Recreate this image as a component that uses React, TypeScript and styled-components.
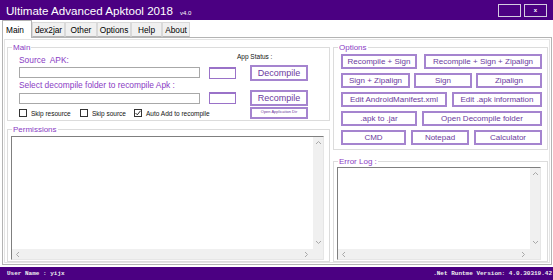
import React from "react";
import styled, { createGlobalStyle } from "styled-components";

const colours = {
  bar: "#4b0082",
  label: "#8a3cc4",
  btnBorder: "#a584cf",
  btnText: "#6b3a9e",
  group: "#dcdcdc",
  scroll: "#f0f0f0",
  arrow: "#a8a8a8",
};

const GlobalStyle = createGlobalStyle`
  html, body { margin: 0; padding: 0; background: #fff; }
  body { font-family: "Liberation Sans", Arial, sans-serif; }
  * { box-sizing: border-box; }
`;

const Window = styled.div`
  width: 553px;
  height: 280px;
  overflow: hidden;
  display: flex;
  flex-direction: column;
  background: #fff;
`;

const TitleBar = styled.div`
  flex: none;
  height: 20px;
  background: ${colours.bar};
  display: flex;
  align-items: center;
  justify-content: space-between;
  padding: 0 6px 0 6px;
`;
const Title = styled.div`
  color: #fff;
  font-size: 11.6px;
  white-space: nowrap;
  padding-top: 1px;
`;
const Version = styled.span`
  font-size: 6px;
  margin-left: 7px;
`;
const WinButtons = styled.div`
  display: flex;
  gap: 3px;
`;
const WinButton = styled.div`
  width: 23px;
  height: 13px;
  border: 1px solid #d4cce0;
  color: #fff;
  font-size: 6px;
  font-weight: bold;
  display: flex;
  align-items: center;
  justify-content: center;
`;

const TabStrip = styled.div`
  flex: none;
  height: 17px;
  display: flex;
  align-items: flex-end;
  padding-left: 2px;
  position: relative;
  z-index: 1;
`;
const Tab = styled.div<{ $w: number; $active?: boolean }>`
  width: ${(p) => p.$w}px;
  height: ${(p) => (p.$active ? 18 : 15)}px;
  margin-bottom: ${(p) => (p.$active ? -1 : 0)}px;
  background: ${(p) => (p.$active ? "#fff" : "#f0f0f0")};
  border: 1px solid ${(p) => (p.$active ? "#b4b4b4" : "#d9d9d9")};
  border-bottom: ${(p) => (p.$active ? "none" : "1px solid #b4b4b4")};
  font-size: 8.3px;
  color: #000;
  display: flex;
  align-items: center;
  justify-content: ${(p) => (p.$active ? "flex-start" : "center")};
  padding-left: ${(p) => (p.$active ? 3 : 0)}px;
  white-space: nowrap;
`;

const TabPage = styled.div`
  flex: none;
  height: 228px;
  margin: 0 1px 0 2px;
  border: 1px solid #b4b4b4;
  box-shadow: inset 0 0 0 1px #fff, inset 0 0 0 2px #e4e4e4;
  padding: 5px 3px 0 4px;
  display: grid;
  grid-template-columns: 323px 215px;
  column-gap: 3px;
  align-content: start;
`;

const Column = styled.div<{ $gap: number }>`
  display: flex;
  flex-direction: column;
  gap: ${(p) => p.$gap}px;
`;

const Group = styled.fieldset<{ $h: number }>`
  margin: 0;
  padding: 0;
  min-width: 0;
  height: ${(p) => p.$h}px;
  border: 1px solid ${colours.group};
  overflow: hidden;
`;
const Legend = styled.legend`
  margin-left: 4px;
  padding: 0 1px;
  font-size: 8px;
  line-height: 9px;
  color: ${colours.label};
`;
const GroupBody = styled.div<{ $pad: string }>`
  padding: ${(p) => p.$pad};
`;

const Row = styled.div<{ $h: number; $align?: string }>`
  height: ${(p) => p.$h}px;
  display: flex;
  align-items: ${(p) => p.$align || "center"};
`;
const FieldLabel = styled.div<{ $w?: number; $top?: number }>`
  width: ${(p) => (p.$w ? `${p.$w}px` : "auto")};
  margin-top: ${(p) => p.$top || 0}px;
  font-size: 8.4px;
  line-height: 9px;
  color: ${colours.label};
  white-space: pre;
`;
const StatusLabel = styled.div`
  font-size: 6.5px;
  line-height: 8px;
  color: #111;
  margin-top: 1px;
  white-space: nowrap;
`;
const TextInput = styled.div`
  width: 181px;
  height: 11px;
  border: 1px solid #a8a8a8;
  background: #fff;
`;
const StatusBox = styled.div`
  width: 27px;
  height: 12px;
  margin-left: 9px;
  border-style: solid;
  border-width: 2px 1px 1px 1px;
  border-color: #9a72c8;
  background: #fff;
`;
const ActionButton = styled.div<{ $h?: number; $fs?: number; $tiny?: boolean }>`
  width: 58px;
  height: ${(p) => p.$h || 16}px;
  margin-left: ${(p) => (p.$tiny ? 0 : 14)}px;
  border: 2px solid ${colours.btnBorder};
  background: #fff;
  color: ${colours.btnText};
  font-size: ${(p) => p.$fs || 9}px;
  display: flex;
  align-items: ${(p) => (p.$tiny ? "flex-start" : "center")};
  justify-content: center;
  white-space: nowrap;
  overflow: hidden;
`;

const CheckRow = styled.div`
  width: 231px;
  display: flex;
  align-items: center;
`;
const CheckItem = styled.div<{ $w: number }>`
  width: ${(p) => p.$w}px;
  display: flex;
  align-items: center;
  gap: 4px;
  font-size: 6.5px;
  color: #111;
  white-space: nowrap;
`;
const CheckBox = styled.div`
  width: 8px;
  height: 8px;
  border: 1px solid #333;
  background: #fff;
  display: flex;
  align-items: center;
  justify-content: center;
`;

const OptionRows = styled.div`
  display: flex;
  flex-direction: column;
  gap: 4px;
`;
const OptionRow = styled.div`
  display: flex;
  justify-content: space-between;
`;
const OptButton = styled.div<{ $w: number }>`
  width: ${(p) => p.$w}px;
  height: 15px;
  border: 2px solid ${colours.btnBorder};
  background: #fff;
  color: ${colours.btnText};
  font-size: 8px;
  display: flex;
  align-items: center;
  justify-content: center;
  white-space: nowrap;
`;

const ScrollBox = styled.div<{ $w: number; $h: number }>`
  width: ${(p) => p.$w}px;
  height: ${(p) => p.$h}px;
  border: 1px solid;
  border-color: #7f7f7f #e6e6e6 #e6e6e6 #7f7f7f;
  background: #fff;
  display: grid;
  grid-template-columns: 1fr 10px;
  grid-template-rows: 1fr 10px;
`;
const VScroll = styled.div`
  background: ${colours.scroll};
  display: flex;
  flex-direction: column;
  justify-content: space-between;
  align-items: center;
  padding: 3px 0;
`;
const HScroll = styled.div`
  background: ${colours.scroll};
  display: flex;
  justify-content: space-between;
  align-items: center;
  padding: 0 3px;
`;
const Corner = styled.div`
  background: ${colours.scroll};
`;

const StatusBar = styled.div`
  flex: none;
  height: 13px;
  margin-top: 2px;
  background: ${colours.bar};
  color: #eee;
  font-family: "Liberation Mono", "DejaVu Sans Mono", monospace;
  font-weight: bold;
  font-size: 6px;
  display: flex;
  align-items: center;
  justify-content: space-between;
  padding: 0 1px 0 7px;
  white-space: pre;
`;

const Arrow = ({ dir }: { dir: "up" | "down" | "left" | "right" }) => {
  const d = {
    up: "M1 4 L3.5 1.5 L6 4",
    down: "M1 2 L3.5 4.5 L6 2",
    left: "M4 1 L1.5 3.5 L4 6",
    right: "M2 1 L4.5 3.5 L2 6",
  }[dir];
  return (
    <svg width="7" height="7" viewBox="0 0 7 7">
      <path d={d} fill="none" stroke={colours.arrow} strokeWidth="1" />
    </svg>
  );
};

const TextArea = ({ w, h }: { w: number; h: number }) => (
  <ScrollBox $w={w} $h={h}>
    <div />
    <VScroll>
      <Arrow dir="up" />
      <Arrow dir="down" />
    </VScroll>
    <HScroll>
      <Arrow dir="left" />
      <Arrow dir="right" />
    </HScroll>
    <Corner />
  </ScrollBox>
);

const Check = ({ checked }: { checked?: boolean }) => (
  <CheckBox>
    {checked && (
      <svg width="6" height="6" viewBox="0 0 6 6">
        <path d="M0.5 3 L2.3 4.8 L5.5 0.8" fill="none" stroke="#222" strokeWidth="1" />
      </svg>
    )}
  </CheckBox>
);

const tabs = [
  { name: "Main", w: 30 },
  { name: "dex2jar", w: 33 },
  { name: "Other", w: 32 },
  { name: "Options", w: 34 },
  { name: "Help", w: 31 },
  { name: "About", w: 28 },
];

const optionRows = [
  [
    { label: "Recompile + Sign", w: 76 },
    { label: "Recompile + Sign + Zipalign", w: 118 },
  ],
  [
    { label: "Sign + Zipalign", w: 69 },
    { label: "Sign", w: 58 },
    { label: "Zipalign", w: 66 },
  ],
  [
    { label: "Edit AndroidManifest.xml", w: 106 },
    { label: "Edit .apk information", w: 90 },
  ],
  [
    { label: ".apk to .jar", w: 76 },
    { label: "Open Decompile folder", w: 120 },
  ],
  [
    { label: "CMD", w: 65 },
    { label: "Notepad", w: 58 },
    { label: "Calculator", w: 68 },
  ],
];

const App: React.FC = () => {
  return (
    <Window>
      <GlobalStyle />
      <TitleBar>
        <Title>
          Ultimate Advanced Apktool 2018<Version>v4.0</Version>
        </Title>
        <WinButtons>
          <WinButton />
          <WinButton>x</WinButton>
        </WinButtons>
      </TitleBar>

      <TabStrip>
        {tabs.map((t, i) => (
          <Tab key={t.name} $w={t.w} $active={i === 0}>
            {t.name}
          </Tab>
        ))}
      </TabStrip>

      <TabPage>
        <Column $gap={4}>
          <Group $h={78}>
            <Legend>Main</Legend>
            <GroupBody $pad="0 0 0 11px">
              <Row $h={12} $align="flex-start">
                <FieldLabel $w={218} $top={4}>
                  {"Source  APK:"}
                </FieldLabel>
                <StatusLabel>App Status :</StatusLabel>
              </Row>
              <Row $h={17}>
                <TextInput />
                <StatusBox />
                <ActionButton>Decompile</ActionButton>
              </Row>
              <Row $h={9}>
                <FieldLabel>Select decompile folder to recompile Apk :</FieldLabel>
              </Row>
              <Row $h={16}>
                <TextInput />
                <StatusBox />
                <ActionButton>Recompile</ActionButton>
              </Row>
              <Row $h={14}>
                <CheckRow>
                  <CheckItem $w={61}>
                    <Check />
                    Skip resource
                  </CheckItem>
                  <CheckItem $w={54}>
                    <Check />
                    Skip source
                  </CheckItem>
                  <CheckItem $w={90}>
                    <Check checked />
                    Auto Add to recompile
                  </CheckItem>
                </CheckRow>
                <ActionButton $h={12} $fs={4} $tiny>
                  Open Application Dir
                </ActionButton>
              </Row>
            </GroupBody>
          </Group>

          <Group $h={137}>
            <Legend>Permissions</Legend>
            <GroupBody $pad="2px 0 0 3px">
              <TextArea w={313} h={124} />
            </GroupBody>
          </Group>
        </Column>

        <Column $gap={7}>
          <Group $h={107}>
            <Legend>Options</Legend>
            <GroupBody $pad="2px 5px 0 7px">
              <OptionRows>
                {optionRows.map((row, i) => (
                  <OptionRow key={i}>
                    {row.map((b) => (
                      <OptButton key={b.label} $w={b.w}>
                        {b.label}
                      </OptButton>
                    ))}
                  </OptionRow>
                ))}
              </OptionRows>
            </GroupBody>
          </Group>

          <Group $h={105}>
            <Legend>Error Log :</Legend>
            <GroupBody $pad="1px 0 0 3px">
              <TextArea w={204} h={93} />
            </GroupBody>
          </Group>
        </Column>
      </TabPage>

      <StatusBar>
        <span>User Name : yijx</span>
        <span>.Net Runtme Version: 4.0.30319.42</span>
      </StatusBar>
    </Window>
  );
};

export default App;
